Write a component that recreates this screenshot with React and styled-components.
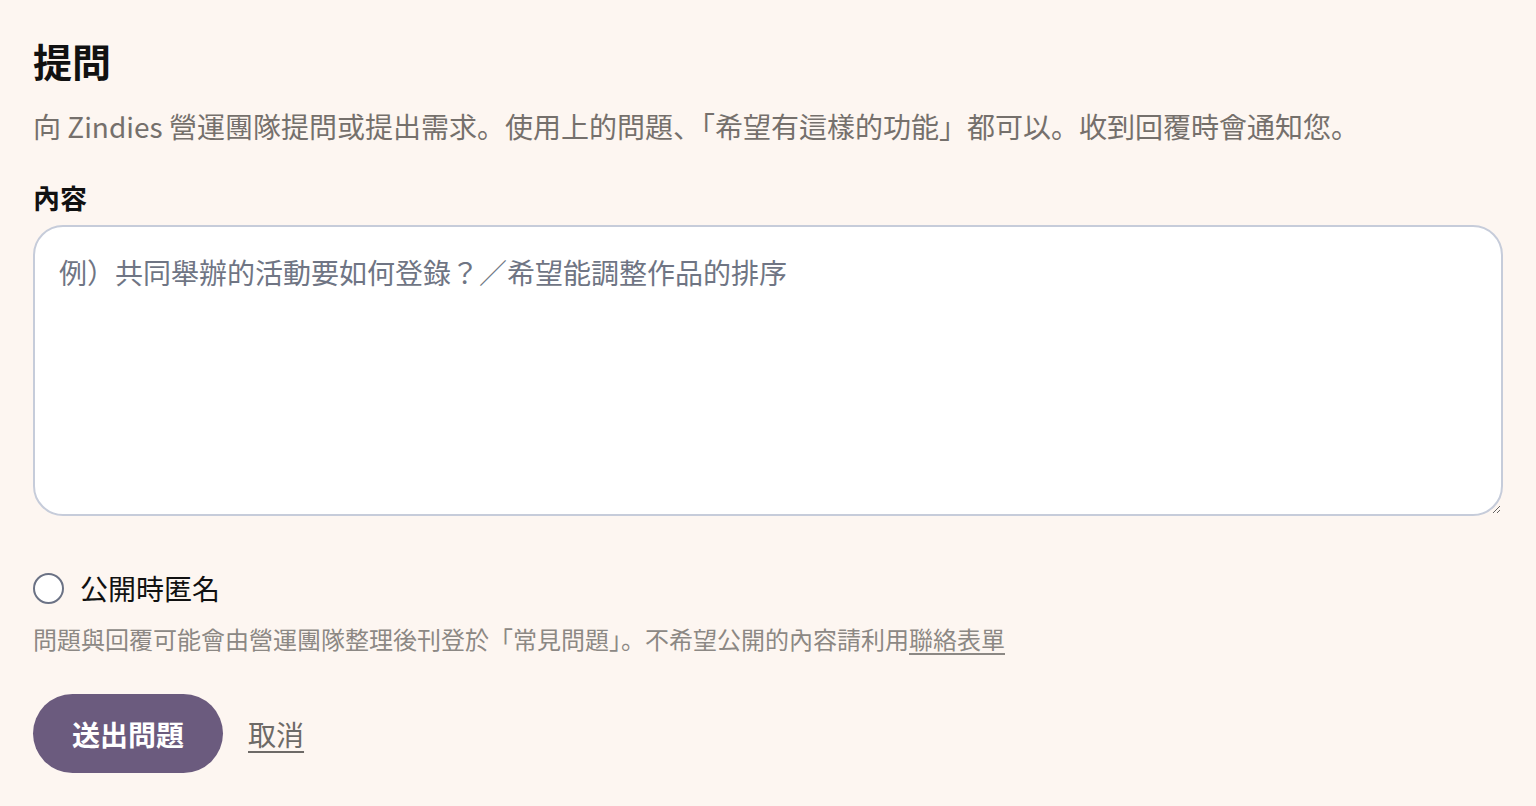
import React from 'react'
import styled, { createGlobalStyle } from 'styled-components'

const GlobalStyle = createGlobalStyle`
  html, body {
    margin: 0;
    padding: 0;
    background: #fdf6f1;
  }
  body {
    font-family: "Noto Sans CJK JP", "Noto Sans CJK TC", "Noto Sans", sans-serif;
    color: #111;
  }
`

const Page = styled.main`
  display: flex;
  flex-direction: column;
  padding: 33px 33px 0 33px;
  min-height: 100vh;
  box-sizing: border-box;
`

const Title = styled.h1`
  margin: 0;
  font-size: 39px;
  line-height: 54px;
  font-weight: 700;
  color: #111;
`

const Lead = styled.p`
  margin: 19px 0 0 0;
  font-size: 28px;
  line-height: 40px;
  color: #75706c;
`

const Label = styled.label`
  margin-top: 34px;
  font-size: 27px;
  line-height: 36px;
  font-weight: 700;
  color: #111;
`

const TextArea = styled.textarea`
  margin-top: 9px;
  height: 291px;
  box-sizing: border-box;
  padding: 25px 24px;
  border: 2px solid #c6ccda;
  border-radius: 30px;
  background: #fff;
  font-family: inherit;
  font-size: 28px;
  line-height: 40px;
  color: #222;
  outline: none;
  resize: vertical;

  &::placeholder {
    color: #6f7584;
  }
`

const CheckRow = styled.label`
  margin-top: 54px;
  display: flex;
  align-items: center;
  gap: 16px;
  height: 36px;
  font-size: 28px;
  color: #111;
  cursor: pointer;
`

const Radio = styled.input`
  appearance: none;
  margin: 0;
  width: 31px;
  height: 31px;
  border: 2px solid #6b7285;
  border-radius: 50%;
  background: #fff;
  box-sizing: border-box;
  cursor: pointer;

  &:checked {
    background: radial-gradient(circle, #6b5b7e 0 7px, #fff 8px);
  }
`

const Hint = styled.p`
  margin: 16px 0 0 0;
  font-size: 24px;
  line-height: 34px;
  color: #8c8884;
`

const HintLink = styled.a`
  color: #8c8884;
  text-decoration: underline;
  text-underline-offset: 4px;
`

const Actions = styled.div`
  margin-top: 38px;
  display: flex;
  align-items: center;
  gap: 25px;
`

const Submit = styled.button`
  height: 79px;
  padding: 0 39px;
  border: none;
  border-radius: 40px;
  background: #6b5b7e;
  color: #fff;
  font-family: inherit;
  font-size: 28px;
  font-weight: 700;
  cursor: pointer;
`

const Cancel = styled.a`
  font-size: 28px;
  color: #6d6a67;
  text-decoration: underline;
  text-underline-offset: 5px;
  cursor: pointer;
`

export default function App() {
  return (
    <>
      <GlobalStyle />
      <Page>
        <Title>提問</Title>
        <Lead>向 Zindies 營運團隊提問或提出需求。使用上的問題、「希望有這樣的功能」都可以。收到回覆時會通知您。</Lead>
        <Label htmlFor="content">內容</Label>
        <TextArea id="content" placeholder="例）共同舉辦的活動要如何登錄？／希望能調整作品的排序" />
        <CheckRow>
          <Radio type="checkbox" />
          公開時匿名
        </CheckRow>
        <Hint>
          問題與回覆可能會由營運團隊整理後刊登於「常見問題」。不希望公開的內容請利用<HintLink href="#">聯絡表單</HintLink>
        </Hint>
        <Actions>
          <Submit type="button">送出問題</Submit>
          <Cancel>取消</Cancel>
        </Actions>
      </Page>
    </>
  )
}
